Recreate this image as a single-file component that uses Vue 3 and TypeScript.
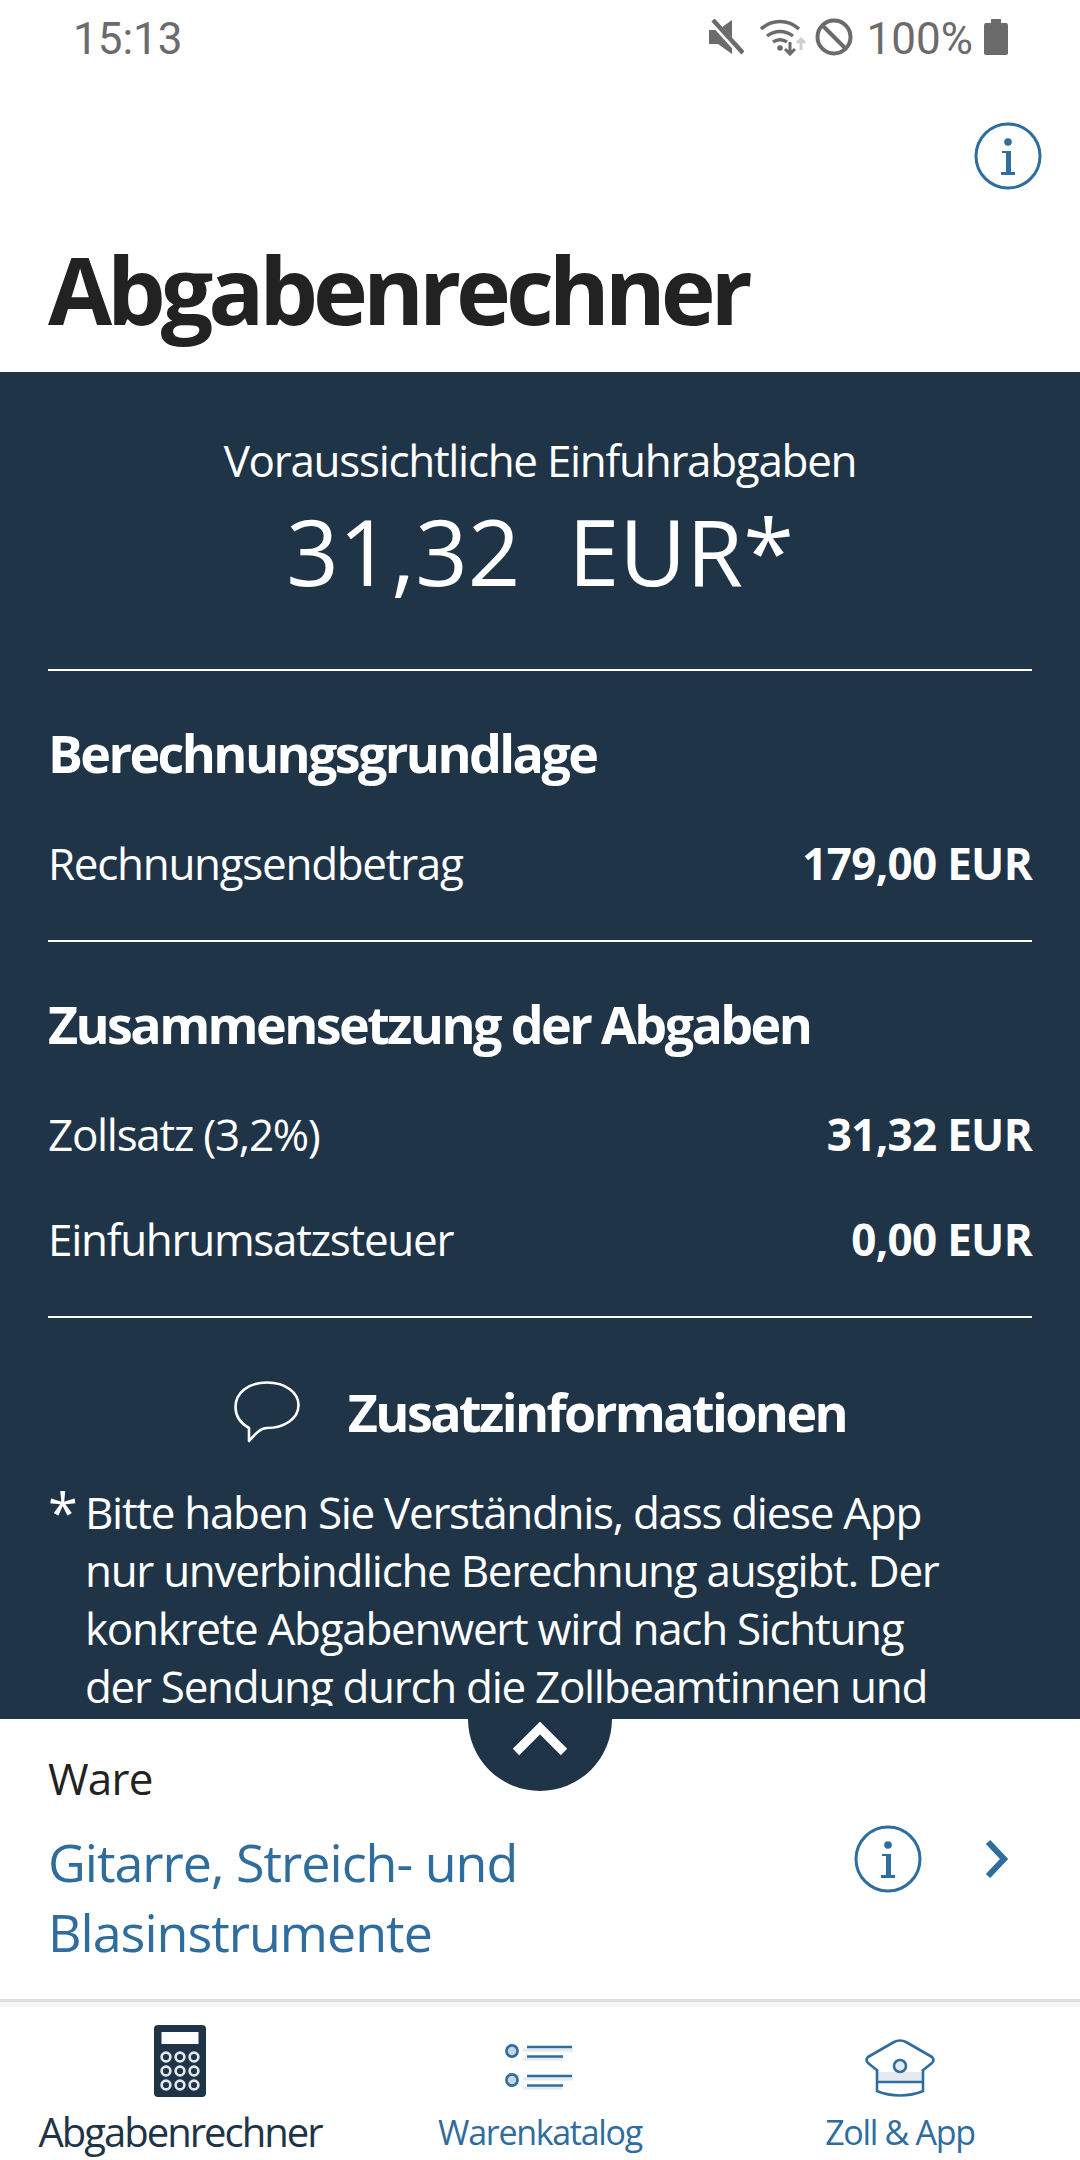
<template>
  <div class="screen">
    <div class="status-bar">
      <span class="clock">15:13</span>
      <div class="status-icons">
        <svg class="ic-mute" width="36" height="36" viewBox="0 0 36 36">
          <path d="M1 11h9L24 1v34L10 25H1z" fill="#6b6b6b" />
          <path d="M3 1l31 34" stroke="#fff" stroke-width="7" />
          <path d="M5 1l30 33" stroke="#6b6b6b" stroke-width="4.500" />
        </svg>
        <svg class="ic-wifi" width="48" height="38" viewBox="0 0 48 38" fill="none">
          <path d="M2 11C13 1 29 1 40 11" stroke="#6b6b6b" stroke-width="3.4" />
          <path d="M8 18c8-6 18-6 26 0" stroke="#6b6b6b" stroke-width="3.4" />
          <path d="M14 24c4-3 10-3 14 0" stroke="#6b6b6b" stroke-width="3.4" />
          <circle cx="21" cy="30" r="2.8" fill="#6b6b6b" />
          <path d="M31 24v12M26 31l5 5 5-5" stroke="#6b6b6b" stroke-width="3" />
          <path d="M42 32V21M38 25l4-4 4 4" stroke="#cfcfcf" stroke-width="3" />
        </svg>
        <svg class="ic-block" width="38" height="38" viewBox="0 0 38 38" fill="none" stroke="#6b6b6b" stroke-width="4">
          <circle cx="19" cy="19" r="16.500" />
          <path d="M7 7l24 24" />
        </svg>
        <span class="battery-text">100%</span>
        <svg class="ic-battery" width="24" height="36" viewBox="0 0 24 36">
          <path d="M7 0h10v4h5a2 2 0 0 1 2 2v28a2 2 0 0 1-2 2H2a2 2 0 0 1-2-2V6a2 2 0 0 1 2-2h5z" fill="#6b6b6b" />
        </svg>
      </div>
    </div>

    <header class="app-header">
      <div class="header-action">
        <svg class="info-icon" width="68" height="68" viewBox="0 0 68 68" fill="none">
          <circle cx="34" cy="34" r="32" stroke="#2e6d9e" stroke-width="3" />
          <circle cx="34" cy="20" r="3.8" fill="#2e6d9e" />
          <path d="M28 29h9v22h-5V31h-4zM27 50h14v3H27z" fill="#2e6d9e" />
        </svg>
      </div>
      <h1 class="page-title">Abgabenrechner</h1>
    </header>

    <main class="result-panel">
      <p class="result-label">Voraussichtliche Einfuhrabgaben</p>
      <p class="result-value">31,32&nbsp; EUR*</p>

      <section class="block">
        <h2 class="block-title">Berechnungsgrundlage</h2>
        <div class="row">
          <span>Rechnungsendbetrag</span>
          <strong>179,00 EUR</strong>
        </div>
      </section>

      <section class="block">
        <h2 class="block-title">Zusammensetzung der Abgaben</h2>
        <div class="row" v-for="(row, index) in rows" :key="index">
          <span>{{ row.label }}</span>
          <strong>{{ row.value }}</strong>
        </div>
      </section>

      <section class="extra">
        <div class="extra-head">
          <svg width="66" height="62" viewBox="0 0 66 62" fill="none">
            <path d="M15 60V47C6 42 1.500 35 1.500 26 1.500 12 14 1.500 33 1.500S64.500 12 64.500 24C64.500 38 50 47 33 47 27 47 22 52 15 60z" stroke="#fff" stroke-width="2.6" stroke-linejoin="round" />
          </svg>
          <h2 class="extra-title">Zusatzinformationen</h2>
        </div>
        <div class="note">
          <span class="note-star">*</span>
          <p class="note-text">Bitte haben Sie Verständnis, dass diese App nur unverbindliche Berechnung ausgibt. Der konkrete Abgabenwert wird nach Sichtung der Sendung durch die Zollbeamtinnen und</p>
        </div>
      </section>
    </main>

    <section class="goods-sheet">
      <button class="sheet-toggle" type="button">
        <svg width="56" height="36" viewBox="0 0 56 36" fill="none">
          <path d="M4 30L28 6l24 24" stroke="#fff" stroke-width="9" />
        </svg>
      </button>
      <div class="goods-text">
        <p class="goods-label">Ware</p>
        <p class="goods-name">Gitarre, Streich- und Blasinstrumente</p>
      </div>
      <div class="goods-actions">
        <svg width="68" height="68" viewBox="0 0 68 68" fill="none">
          <circle cx="34" cy="34" r="32" stroke="#2e6d9e" stroke-width="3" />
          <circle cx="34" cy="20" r="3.8" fill="#2e6d9e" />
          <path d="M28 29h9v22h-5V31h-4zM27 50h14v3H27z" fill="#2e6d9e" />
        </svg>
        <svg width="24" height="38" viewBox="0 0 24 38" fill="none">
          <path d="M4 2l16 17L4 36" stroke="#2e6d9e" stroke-width="6" />
        </svg>
      </div>
    </section>

    <nav class="tab-bar">
      <div class="tab active">
        <svg width="52" height="72" viewBox="0 0 52 72">
          <rect width="52" height="72" rx="4" fill="#203448" />
          <rect x="7.500" y="7" width="37" height="12" fill="#fff" />
          <g fill="none" stroke="#e4e8ec" stroke-width="2.6">
            <circle v-for="(dot, index) in keypad" :key="index" :cx="dot.x" :cy="dot.y" r="4.4" />
          </g>
        </svg>
        <span>Abgabenrechner</span>
      </div>
      <div class="tab">
        <svg class="ic-list" width="72" height="56" viewBox="0 0 72 56" fill="none">
          <path d="M16 12h50M16 21h40M16 41h50M16 50h40" stroke="#e4eaf0" stroke-width="3" transform="translate(3 2)" />
          <circle cx="8" cy="15" r="5.6" fill="#c5d4e0" stroke="#2e6d9e" stroke-width="2.6" />
          <circle cx="8" cy="44" r="5.6" fill="#c5d4e0" stroke="#2e6d9e" stroke-width="2.6" />
          <path d="M23 11h45M23 20.500h36M23 40h45M23 49.500h36" stroke="#2e6d9e" stroke-width="2.6" />
        </svg>
        <span>Warenkatalog</span>
      </div>
      <div class="tab">
        <svg width="70" height="58" viewBox="0 0 70 58" fill="none">
          <path d="M13 33h44v10H13z" fill="#e4eaf0" />
          <path d="M13 32L3 24c-2-2-2-4 0-6L29 3c4-2 8-2 12 0l26 15c2 2 2 4 0 6l-10 8" stroke="#2e6d9e" stroke-width="2.6" stroke-linejoin="round" />
          <circle cx="35" cy="27" r="6" fill="#e4eaf0" stroke="#2e6d9e" stroke-width="2.6" />
          <path d="M12 31v21c14 6 32 6 46 0V31M12 43h46" stroke="#2e6d9e" stroke-width="2.6" />
        </svg>
        <span>Zoll &amp; App</span>
      </div>
    </nav>
  </div>
</template>

<script setup lang="ts">
const rows = [
  { label: 'Zollsatz (3,2%)', value: '31,32 EUR' },
  { label: 'Einfuhrumsatzsteuer', value: '0,00 EUR' },
];

const keypad: { x: number; y: number }[] = [];
for (const y of [32, 46, 60]) {
  for (const x of [12, 26, 40]) {
    keypad.push({ x, y });
  }
}
</script>

<style scoped>
.screen {
  width: 1080px;
  height: 2160px;
  display: flex;
  flex-direction: column;
  overflow: hidden;
  background-color: #fff;
  font-family: "Open Sans", "Noto Sans", sans-serif;
  letter-spacing: -1.3px;
  color: #222;
}

.status-bar {
  height: 74px;
  flex: none;
  display: flex;
  justify-content: space-between;
  align-items: center;
  padding: 0 72px 0 73px;
  font-family: Roboto, sans-serif;
  font-size: 44px;
  letter-spacing: 0;
  color: #6b6b6b;
}

.clock,
.battery-text {
  padding-top: 4px;
}

.status-icons {
  display: flex;
  align-items: center;
}

.ic-wifi {
  margin-left: 15px;
}

.ic-block {
  margin-left: 8px;
}

.battery-text {
  margin-left: 14px;
}

.ic-battery {
  margin-left: 11px;
}

.app-header {
  height: 298px;
  flex: none;
  padding: 48px 48px 0;
  box-sizing: border-box;
}

.header-action {
  display: flex;
  justify-content: flex-end;
  margin-right: -10px;
}

.page-title {
  margin: 44px 0 0;
  font-size: 93px;
  line-height: 110px;
  font-weight: 700;
  letter-spacing: -5.1px;
}

.result-panel {
  flex: 1;
  min-height: 0;
  background-color: #203448;
  color: #fff;
  padding: 60px 48px 0;
  overflow: hidden;
  border-bottom: 13px solid #203448;
}

.result-panel p,
.block-title,
.extra-title {
  margin: 0;
}

.result-label {
  text-align: center;
  font-size: 44px;
  line-height: 56px;
}

.result-value {
  text-align: center;
  font-size: 92px;
  line-height: 108px;
  letter-spacing: 0;
  padding-bottom: 64px;
  border-bottom: 2px solid #fff;
  margin-top: 9px !important;
}

.block {
  padding: 53px 0 49px;
  border-bottom: 2px solid #fff;
}

.block-title {
  font-size: 52px;
  line-height: 58px;
  font-weight: 700;
  letter-spacing: -2.6px;
}

.row {
  display: flex;
  justify-content: space-between;
  align-items: center;
  margin-top: 53px;
  font-size: 44px;
  line-height: 56px;
}

.row + .row {
  margin-top: 49px;
}

.row strong {
  font-weight: 700;
  letter-spacing: -0.7px;
}

.extra {
  padding-top: 61px;
}

.extra-head {
  display: flex;
  justify-content: center;
  align-items: center;
  gap: 48px;
}

.extra-title {
  font-size: 52px;
  line-height: 66px;
  font-weight: 700;
  letter-spacing: -2.6px;
}

.note {
  display: flex;
  margin-top: 38px;
  font-size: 44px;
  line-height: 58px;
}

.note-star {
  width: 37px;
  flex: none;
  font-size: 54px;
}

.note .note-text {
  width: 870px;
}

.goods-sheet {
  position: relative;
  height: 283px;
  flex: none;
  display: flex;
  justify-content: space-between;
  padding: 34px 72px 0 48px;
  box-sizing: border-box;
  border-bottom: 3px solid #dedede;
}

.sheet-toggle {
  position: absolute;
  top: -72px;
  left: 468px;
  width: 144px;
  height: 144px;
  padding: 75px 0 0;
  border: none;
  border-radius: 50%;
  background-color: #203448;
  clip-path: inset(72px 0 0 0);
  display: flex;
  align-items: flex-start;
  justify-content: center;
}

.goods-text p {
  margin: 0;
}

.goods-label {
  font-size: 44px;
  line-height: 50px;
  letter-spacing: -0.8px;
}

.goods-name {
  width: 560px;
  margin-top: 24px !important;
  font-size: 52px;
  line-height: 70px;
  letter-spacing: -1px;
  color: #2e6d9e;
}

.goods-actions {
  display: flex;
  align-items: center;
  gap: 62px;
  height: 68px;
  margin-top: 72px;
}

.tab-bar {
  height: 158px;
  flex: none;
  box-sizing: border-box;
  display: grid;
  grid-template-columns: 360px 360px 360px;
  border-top: 5px solid #f6f6f6;
}

.tab {
  display: flex;
  flex-direction: column;
  align-items: center;
  justify-content: flex-end;
  gap: 13px;
  padding-bottom: 6px;
  color: #2e6d9e;
  font-size: 34px;
  letter-spacing: -1.3px;
  line-height: 44px;
}

.ic-list {
  margin-bottom: 5px;
}

.tab.active {
  color: #203448;
  font-size: 40px;
  letter-spacing: -2px;
}
</style>
